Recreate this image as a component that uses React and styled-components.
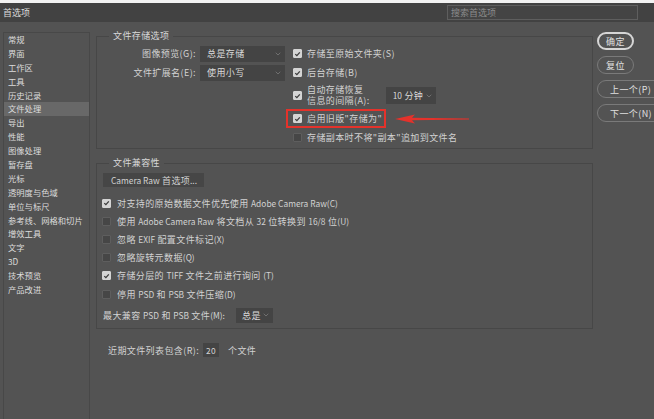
import React from "react";
import styled, { createGlobalStyle } from "styled-components";
import { ChevronDown } from "lucide-react";

const GlobalStyle = createGlobalStyle`
  html, body {
    margin: 0;
    padding: 0;
  }
  body {
    width: 654px;
    height: 419px;
    overflow: hidden;
    background: #535353;
    font-family: "Noto Sans CJK SC", "Noto Sans", sans-serif;
    color: #d2d2d2;
  }
  * {
    box-sizing: border-box;
  }
`;

// Window shell
const Window = styled.div`
  width: 654px;
  height: 419px;
  border-top: 3px solid #f2f2f2;
  display: flex;
  flex-direction: column;
  overflow: hidden;
`;

const TitleBar = styled.div`
  height: 19px;
  flex-shrink: 0;
  background: #424242;
  display: flex;
  align-items: center;
  padding: 0 16px 0 3px;
`;

const Title = styled.div`
  font-size: 9px;
  color: #dcdcdc;
`;

const Search = styled.div`
  margin-left: auto;
  width: 191px;
  height: 15px;
  border: 1px solid #5e5e5e;
  background: #444;
  font-size: 9px;
  color: #8c8c8c;
  padding-left: 3px;
  line-height: 13px;
`;

const Body = styled.div`
  flex: 1;
  display: flex;
`;

// Sidebar
const Sidebar = styled.div`
  margin: 10px 0 0 3px;
  width: 87px;
  flex-shrink: 0;
  border: 1px solid #484848;
  border-bottom: none;
`;

const NavItem = styled.div`
  height: 13.9px;
  line-height: 13.9px;
  font-size: 8.3px;
  padding-left: 4px;
  color: #dcdcdc;
  white-space: nowrap;
  background: ${(p) => (p.$active ? "#686868" : "transparent")};
`;

// Main
const Main = styled.div`
  margin-left: 6px;
  width: 497px;
  flex-shrink: 0;
  padding-top: 8px;
  display: flex;
  flex-direction: column;
`;

const Group = styled.fieldset`
  margin: ${(p) => p.$top || 0}px 0 0 0;
  padding: 0;
  min-width: 0;
  border: 1px solid #474747;
`;

const Legend = styled.legend`
  font-size: 9px;
  line-height: 12px;
  padding: 0 4px;
  margin-left: 12px;
  color: #d8d8d8;
  letter-spacing: 0.4px;
`;

const SaveGrid = styled.div`
  display: grid;
  grid-template-columns: 99px 90px 1fr;
  grid-template-rows: 19px 19px 27px 19px 19px;
  padding: 2px 0 1px 0;
  align-items: center;
`;

const FieldLabel = styled.div`
  grid-column: 1;
  grid-row: ${(p) => p.$row};
  text-align: right;
  font-size: 9px;
  letter-spacing: 0.4px;
  white-space: nowrap;
`;

const Select = styled.div`
  width: ${(p) => p.$w}px;
  height: ${(p) => p.$h || 16}px;
  margin-left: ${(p) => p.$ml || 0}px;
  grid-column: ${(p) => (p.$row ? 2 : "auto")};
  grid-row: ${(p) => p.$row || "auto"};
  background: #444444;
  font-size: 9px;
  letter-spacing: 0.4px;
  display: flex;
  align-items: center;
  justify-content: space-between;
  padding: 0 3px 0 ${(p) => p.$pl || 7}px;
  color: #dadada;
  flex-shrink: 0;
  white-space: nowrap;
  svg {
    color: #9a9a9a;
  }
`;

const CheckCell = styled.div`
  grid-column: 3;
  grid-row: ${(p) => p.$row};
  height: 100%;
  display: flex;
  align-items: center;
  gap: 9px;
`;

const CheckItem = styled.div`
  display: flex;
  align-items: center;
  gap: 5px;
  width: ${(p) => (p.$w ? `${p.$w}px` : "auto")};
  height: ${(p) => p.$h || 18}px;
  padding: 0 5px;
  border: 2px solid ${(p) => (p.$marked ? "#e4322b" : "transparent")};
  font-size: 9px;
  letter-spacing: 0.4px;
  white-space: nowrap;
  flex-shrink: 0;
`;

const Box = styled.span`
  width: 9px;
  height: 9px;
  flex-shrink: 0;
  display: inline-flex;
  align-items: center;
  justify-content: center;
  background: ${(p) => (p.$checked ? "#d4d4d4" : "#464646")};
  border: 1px solid ${(p) => (p.$checked ? "#d4d4d4" : "#5e5e5e")};
  border-radius: 1px;
`;

const TwoLine = styled.div`
  font-size: 9px;
  letter-spacing: 0.4px;
  div {
    height: 10.5px;
    line-height: 10.5px;
  }
`;

const Lat = styled.span`
  font-size: 8.4px;
  letter-spacing: 0;
`;

const CompatBody = styled.div`
  padding: 4px 0 4px 5px;
  display: flex;
  flex-direction: column;
`;

const RawButton = styled.div`
  width: 101px;
  height: 14px;
  margin-left: 1px;
  background: #464646;
  font-size: 9px;
  letter-spacing: 0.3px;
  line-height: 14px;
  padding-left: 8px;
  margin-bottom: 7px;
  white-space: nowrap;
`;

const CompatRow = styled.div`
  height: 18.2px;
  display: flex;
  align-items: center;
  gap: 6px;
  font-size: 9px;
  letter-spacing: 0.4px;
  white-space: nowrap;
`;

const InlineRow = styled.div`
  height: ${(p) => p.$h}px;
  margin-top: ${(p) => p.$mt}px;
  padding-left: ${(p) => p.$pl}px;
  display: flex;
  align-items: center;
  font-size: 9px;
  letter-spacing: 0.4px;
  white-space: nowrap;
`;

const InlineLabel = styled.span`
  width: ${(p) => p.$w}px;
  flex-shrink: 0;
`;

const NumberBox = styled.div`
  width: 16px;
  height: 14px;
  background: #444;
  font-size: 8.4px;
  line-height: 14px;
  text-align: center;
  margin-right: 9px;
`;

// Right buttons
const ButtonCol = styled.div`
  margin-left: 4px;
  padding-top: 10px;
  display: flex;
  flex-direction: column;
  gap: 6px;
`;

const PillButton = styled.div`
  width: ${(p) => (p.$wide ? 66 : 37)}px;
  height: 18px;
  border-radius: 9px;
  border: ${(p) => (p.$primary ? "2px solid #d6d6d6" : "1px solid #7a7a7a")};
  font-size: 9px;
  letter-spacing: 0.4px;
  display: flex;
  align-items: center;
  justify-content: ${(p) => (p.$wide ? "flex-start" : "center")};
  padding-left: ${(p) => (p.$wide ? 12 : 0)}px;
  color: #e0e0e0;
  white-space: nowrap;
`;

const navItems = [
  "常规",
  "界面",
  "工作区",
  "工具",
  "历史记录",
  "文件处理",
  "导出",
  "性能",
  "图像处理",
  "暂存盘",
  "光标",
  "透明度与色域",
  "单位与标尺",
  "参考线、网格和切片",
  "增效工具",
  "文字",
  "3D",
  "技术预览",
  "产品改进",
];

const compatOptions = [
  { text: "对支持的原始数据文件优先使用 Adobe Camera Raw(C)", on: true },
  { text: "使用 Adobe Camera Raw 将文档从 32 位转换到 16/8 位(U)", on: false },
  { text: "忽略 EXIF 配置文件标记(X)", on: false },
  { text: "忽略旋转元数据(Q)", on: false },
  { text: "存储分层的 TIFF 文件之前进行询问 (T)", on: true },
  { text: "停用 PSD 和 PSB 文件压缩(D)", on: false },
];

// wrap latin runs so they come out narrower, like the PS UI font
const mixed = (text) =>
  text
    .split(/([A-Za-z0-9/.():]+(?: [A-Za-z0-9/.():]+)*)/)
    .map((part, i) => (i % 2 ? <Lat key={i}>{part}</Lat> : part));

const Check = ({ on }) => (
  <Box $checked={on}>
    {on && (
      <svg width="8" height="8" viewBox="0 0 10 10">
        <path
          d="M1.8 5.2 L4.1 7.4 L8.3 2.6"
          fill="none"
          stroke="#3a3a3a"
          strokeWidth="1.8"
        />
      </svg>
    )}
  </Box>
);

const Chevron = () => <ChevronDown size={8} strokeWidth={1.5} />;

const RedArrow = () => (
  <svg width="78" height="14" viewBox="0 0 78 14">
    <path
      d="M0 7 L20 2.5 L17 5.7 L74 6.6 L74 7.4 L17 8.3 L20 11.5 Z"
      fill="#e4322b"
    />
  </svg>
);

export default function App() {
  return (
    <>
      <GlobalStyle />
      <Window>
        <TitleBar>
          <Title>首选项</Title>
          <Search>搜索首选项</Search>
        </TitleBar>
        <Body>
          <Sidebar>
            {navItems.map((item) => (
              <NavItem key={item} $active={item === "文件处理"}>
                {item}
              </NavItem>
            ))}
          </Sidebar>

          <Main>
            <Group>
              <Legend>文件存储选项</Legend>
              <SaveGrid>
                <FieldLabel $row={1}>图像预览(G):</FieldLabel>
                <Select $w={85} $ml={4} $row={1}>
                  总是存储 <Chevron />
                </Select>
                <FieldLabel $row={2}>文件扩展名(E):</FieldLabel>
                <Select $w={85} $ml={4} $row={2}>
                  使用小写 <Chevron />
                </Select>

                <CheckCell $row={1}>
                  <CheckItem>
                    <Check on />
                    存储至原始文件夹(S)
                  </CheckItem>
                </CheckCell>
                <CheckCell $row={2}>
                  <CheckItem>
                    <Check on />
                    后台存储(B)
                  </CheckItem>
                </CheckCell>
                <CheckCell $row={3}>
                  <CheckItem $h={26}>
                    <Check on />
                    <TwoLine>
                      <div>自动存储恢复</div>
                      <div>信息的间隔(A):</div>
                    </TwoLine>
                    <Select $w={50} $h={17} $ml={11}>
                      <span>
                        <Lat>10</Lat> 分钟
                      </span>
                      <Chevron />
                    </Select>
                  </CheckItem>
                </CheckCell>
                <CheckCell $row={4}>
                  <CheckItem $marked $h={19} $w={100}>
                    <Check on />
                    启用旧版"存储为"
                  </CheckItem>
                  <RedArrow />
                </CheckCell>
                <CheckCell $row={5}>
                  <CheckItem>
                    <Check on={false} />
                    存储副本时不将"副本"追加到文件名
                  </CheckItem>
                </CheckCell>
              </SaveGrid>
            </Group>

            <Group $top={8}>
              <Legend>文件兼容性</Legend>
              <CompatBody>
                <RawButton>{mixed("Camera Raw 首选项...")}</RawButton>
                {compatOptions.map((o) => (
                  <CompatRow key={o.text}>
                    <Check on={o.on} />
                    <span>{mixed(o.text)}</span>
                  </CompatRow>
                ))}
                <InlineRow $h={18} $mt={3} $pl={1}>
                  <InlineLabel $w={133}>
                    {mixed("最大兼容 PSD 和 PSB 文件(M):")}
                  </InlineLabel>
                  <Select $w={37} $h={15} $pl={6}>
                    总是 <Chevron />
                  </Select>
                </InlineRow>
              </CompatBody>
            </Group>

            <InlineRow $h={14} $mt={14} $pl={12}>
              <InlineLabel $w={95}>近期文件列表包含(R):</InlineLabel>
              <NumberBox>20</NumberBox>
              个文件
            </InlineRow>
          </Main>

          <ButtonCol>
            <PillButton $primary>确定</PillButton>
            <PillButton>复位</PillButton>
            <PillButton $wide>上一个(P)</PillButton>
            <PillButton $wide>下一个(N)</PillButton>
          </ButtonCol>
        </Body>
      </Window>
    </>
  );
}
